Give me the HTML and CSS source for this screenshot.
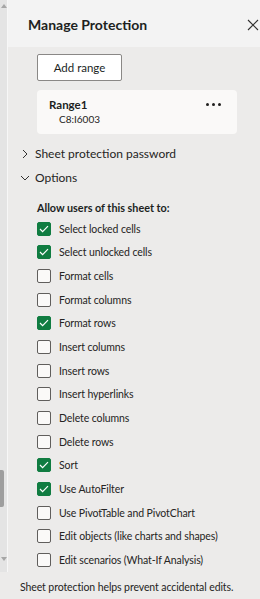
FILE: index.html
```html
<!DOCTYPE html>
<html lang="en">
<head>
  <meta charset="UTF-8">
  <title>Manage Protection</title>
  <link rel="stylesheet" href="styles.css">
</head>
<body>
  <div class="app">
    <div class="main">
      <!-- barra de rolagem da planilha -->
      <div class="scrollbar">
        <span class="arrow up"></span>
        <div class="track">
          <div class="thumb"></div>
        </div>
        <span class="arrow down"></span>
      </div>

      <div class="pane">
        <div class="header">
          <h1>Manage Protection</h1>
          <svg class="close" width="12" height="12" viewBox="0 0 12 12">
            <path d="M1 1 L11 11 M11 1 L1 11" stroke="#323130" stroke-width="1.1" fill="none"/>
          </svg>
        </div>

        <div class="content">
          <button class="add-btn">Add range</button>

          <div class="card">
            <div class="card-text">
              <div class="range-name">Range1</div>
              <div class="range-ref">C8:I6003</div>
            </div>
            <div class="more"><i></i><i></i><i></i></div>
          </div>

          <div class="section first">
            <svg class="chev" width="10" height="10" viewBox="0 0 10 10">
              <path d="M3 1 L7 5 L3 9" stroke="#323130" stroke-width="1" fill="none"/>
            </svg>
            <span>Sheet protection password</span>
          </div>
          <div class="section">
            <svg class="chev" width="10" height="10" viewBox="0 0 10 10">
              <path d="M1 3 L5 7 L9 3" stroke="#323130" stroke-width="1" fill="none"/>
            </svg>
            <span>Options</span>
          </div>

          <div class="options">
            <div class="opt-title">Allow users of this sheet to:</div>
            <ul class="checks" id="checks"></ul>
          </div>
        </div>
      </div>
    </div>

    <div class="footer">Sheet protection helps prevent accidental edits.</div>
  </div>

  <script>
    const options = [
      ["Select locked cells", true],
      ["Select unlocked cells", true],
      ["Format cells", false],
      ["Format columns", false],
      ["Format rows", true],
      ["Insert columns", false],
      ["Insert rows", false],
      ["Insert hyperlinks", false],
      ["Delete columns", false],
      ["Delete rows", false],
      ["Sort", true],
      ["Use AutoFilter", true],
      ["Use PivotTable and PivotChart", false],
      ["Edit objects (like charts and shapes)", false],
      ["Edit scenarios (What-If Analysis)", false]
    ];

    const list = document.getElementById("checks");
    const tick = '<svg width="10" height="8" viewBox="0 0 10 8"><path d="M1 4 L3.6 6.6 L9 1.2" stroke="#fff" stroke-width="1.2" fill="none"/></svg>';

    options.forEach(([label, on]) => {
      const li = document.createElement("li");
      li.className = "check";
      li.innerHTML = `<span class="box ${on ? "on" : ""}">${on ? tick : ""}</span><span>${label}</span>`;
      li.addEventListener("click", () => {
        const box = li.querySelector(".box");
        box.classList.toggle("on");
        box.innerHTML = box.classList.contains("on") ? tick : "";
      });
      list.appendChild(li);
    });
  </script>
</body>
</html>
```

FILE: styles.css
```css
body {
  margin: 0;
  font-family: "Lato", "Noto Sans", sans-serif;
  color: #252423;
  background: #ecebea;
}

.app {
  width: 260px;
  height: 599px;
  display: flex;
  flex-direction: column;
  overflow: hidden;
}

.main {
  display: flex;
  height: 572px;
}

/* Barra de rolagem */
.scrollbar {
  width: 7px;
  flex: none;
  background: #e4e4e4;
  border-right: 1px solid #f7f7f7;
  display: flex;
  flex-direction: column;
  align-items: flex-start;
}

.arrow {
  width: 0;
  height: 0;
  margin-left: 1px;
  border-left: 3px solid transparent;
  border-right: 3px solid transparent;
}

.arrow.up {
  margin-top: 4px;
  border-bottom: 4px solid #a6a6a6;
}

.arrow.down {
  margin-bottom: 11px;
  border-top: 4px solid #a6a6a6;
}

.track {
  flex: 1;
  padding-top: 462px;
}

.thumb {
  width: 4px;
  height: 37px;
  background: #9e9e9e;
  border-radius: 0 2px 2px 0;
}

.pane {
  flex: 1;
  display: flex;
  flex-direction: column;
}

.header {
  height: 49px;
  box-sizing: border-box;
  background: #f3f3f3;
  display: flex;
  align-items: center;
  justify-content: space-between;
  padding: 2px 0 0 20px;
}

h1 {
  margin: 0;
  font-size: 14px;
  font-weight: 700;
  color: #201f1e;
}

.close {
  margin-right: 1px;
  margin-top: 1px;
}

.content {
  padding: 7px 0 0 29px;
  display: flex;
  flex-direction: column;
  align-items: flex-start;
}

.add-btn {
  width: 85px;
  height: 27px;
  background: #fff;
  border: 1px solid #8a8886;
  border-radius: 2px;
  font-family: inherit;
  font-size: 11.5px;
  color: #201f1e;
  padding: 0;
}

.card {
  margin-top: 9px;
  width: 200px;
  height: 44px;
  box-sizing: border-box;
  background: #faf9f8;
  border-radius: 4px;
  display: flex;
  justify-content: space-between;
  padding: 7px 16px 0 12px;
}

.range-name {
  font-size: 11.5px;
  font-weight: 700;
  color: #201f1e;
  line-height: 15px;
}

.range-ref {
  font-size: 10px;
  padding-left: 10px;
  line-height: 15px;
}

.more {
  display: flex;
  gap: 3px;
  padding-top: 6px;
}

.more i {
  width: 3px;
  height: 3px;
  background: #201f1e;
  border-radius: 50%;
}

.section {
  display: flex;
  align-items: center;
  gap: 5px;
  margin-left: -17px;
  font-size: 12px;
  height: 24px;
}

.section.first {
  margin-top: 8px;
}

.options {
  margin-top: 10px;
}

.opt-title {
  font-size: 10.8px;
  font-weight: 700;
  color: #201f1e;
  line-height: 16px;
  margin-bottom: 1px;
}

.checks {
  list-style: none;
  margin: 0;
  padding: 0;
}

.check {
  display: flex;
  align-items: center;
  gap: 8px;
  height: 23.7px;
  font-size: 10.5px;
  letter-spacing: -0.1px;
  cursor: pointer;
}

.box {
  width: 12px;
  height: 12px;
  border: 1px solid #605e5c;
  border-radius: 2px;
  background: #faf9f8;
  display: flex;
  align-items: center;
  justify-content: center;
}

.box.on {
  background: #107c41;
  border-color: #107c41;
}

.footer {
  flex: 1;
  font-size: 10.5px;
  letter-spacing: -0.1px;
  padding: 9px 0 0 20px;
  background: #ecebea;
}
```
